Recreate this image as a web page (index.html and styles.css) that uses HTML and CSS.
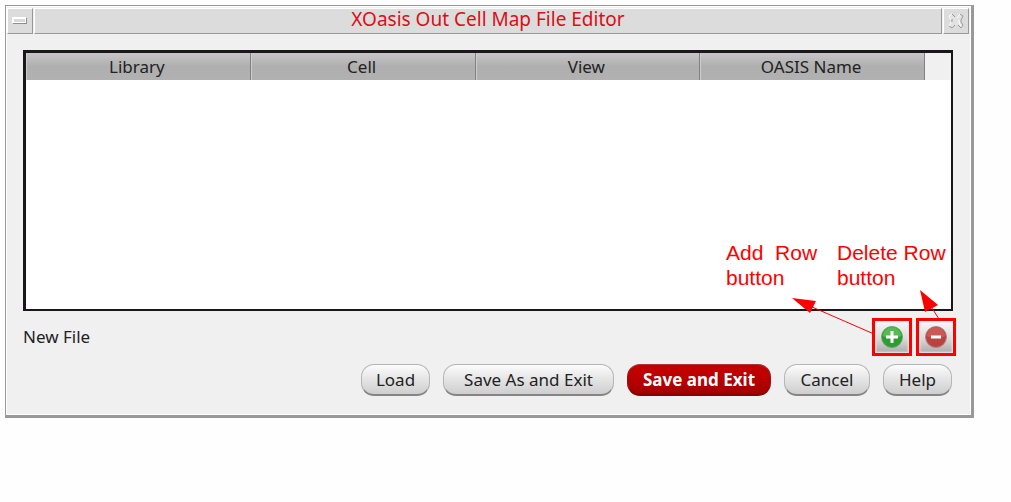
FILE: index.html
```html
<!DOCTYPE html>
<html lang="en">
<head>
<meta charset="utf-8">
<meta name="viewport" content="width=device-width, initial-scale=1">
<title>XOasis Out Cell Map File Editor</title>
<link rel="stylesheet" href="styles.css">
</head>
<body>
<main class="window">
  <header class="titlebar">
    <button class="title-button" type="button" aria-label="Minimize">
      <svg width="16" height="8" viewBox="0 0 16 8" shape-rendering="crispEdges" aria-hidden="true">
        <rect x="1" y="1" width="14" height="6" fill="#8f8f8f"/>
        <rect x="0" y="0" width="14" height="6" fill="#fff"/>
        <rect x="2" y="2" width="11" height="3" fill="#d9d9d9"/>
      </svg>
    </button>
    <h1 class="title">XOasis Out Cell Map File Editor</h1>
    <button class="title-button" type="button" aria-label="Close">
      <svg width="18" height="18" viewBox="0 0 18 18" fill="none" aria-hidden="true">
        <path d="M2 4l3-2 3 3h3l3-3 2 2-2 4v2l2 3-2 3-3-3H8l-3 3-3-2 2-4V8z" fill="#e2e2e2"/>
        <path d="M4 8L2 4l3-2M10 6l3-4M4 10l-2 4M8 13l-2 2M12 8v3l3 4" stroke="#fff"/>
        <path d="M5 2l3 3M5 7v3M2 14l3 2 3-3M13 2l3 2-2 4v2l2 3-2 3-3-3" stroke="#9a9a9a"/>
      </svg>
    </button>
  </header>

  <div class="content">
    <div class="list">
      <table class="cell-table">
        <thead>
          <tr>
            <th scope="col">Library</th>
            <th scope="col">Cell</th>
            <th scope="col">View</th>
            <th scope="col">OASIS Name</th>
            <td class="filler"></td>
          </tr>
        </thead>
        <tbody></tbody>
      </table>
    </div>

    <div class="status-row">
      <span class="status">New File</span>
      <div class="row-tools">
        <button class="tool" type="button" aria-label="Add row">
          <svg width="24" height="24" viewBox="0 0 24 24" aria-hidden="true">
            <circle cx="12" cy="12" r="10.500" fill="#2c9d31" stroke="#69a56b"/>
            <path d="M3 11a9 9 0 0 1 18 0q-9 5-18 0z" fill="#58bb52"/>
            <path d="M12 6v12M6 12h12" stroke="#fff" stroke-width="3"/>
          </svg>
        </button>
        <button class="tool" type="button" aria-label="Delete row">
          <svg width="24" height="24" viewBox="0 0 24 24" aria-hidden="true">
            <circle cx="12" cy="12" r="10.500" fill="#b9433f" stroke="#b98380"/>
            <path d="M3 11a9 9 0 0 1 18 0q-9 5-18 0z" fill="#cb5a56"/>
            <path d="M7 12h10" stroke="#fff" stroke-width="3"/>
          </svg>
        </button>
      </div>
    </div>

    <footer class="actions">
      <button class="action load" type="button">Load</button>
      <button class="action save-as" type="button">Save As and Exit</button>
      <button class="action primary" type="button">Save and Exit</button>
      <button class="action cancel" type="button">Cancel</button>
      <button class="action help" type="button">Help</button>
    </footer>
  </div>

  <div class="callouts">
    <p class="callout add-note">Add &nbsp;Row<br>button</p>
    <p class="callout">Delete Row<br>button</p>
    <svg class="arrows" width="230" height="60" viewBox="0 0 230 60" aria-hidden="true">
      <path d="M70 10L148 44M202 12L213 29" stroke="#f00" fill="none"/>
      <path d="M66 8L90 11L84 23zM194 0L212 15L199 22z" fill="#f00"/>
    </svg>
  </div>
</main>
</body>
</html>
```
FILE: styles.css
```css
* {
  box-sizing: border-box;
}

body {
  margin: 0;
  padding: 5px 37px 5px 5px;
  background: #fefefe;
  color: #222;
  font: 17px/24px "Noto Sans", "Open Sans", sans-serif;
}

button {
  margin: 0;
  padding: 0;
  color: inherit;
  font: inherit;
}

svg {
  display: block;
}

.window {
  position: relative;
  border: 1px solid #999;
  border-right-width: 3px;
  border-bottom-width: 3px;
  background: #f1f0f1;
  box-shadow: inset 1px 1px #fff, inset -1px -1px #fff;
}

.titlebar {
  display: flex;
  gap: 1px;
  height: 28px;
  padding: 2px 2px 0 1px;
}

.title-button,
.title {
  border: 1px solid #fff;
  border-right-color: #999;
  border-bottom-color: #999;
  background: #dcdcdc;
}

.title-button {
  display: flex;
  flex: 0 0 26px;
  align-items: center;
  justify-content: center;
}

.title {
  flex: 1;
  margin: 0;
  color: #dc0d17;
  font-size: 19px;
  font-weight: 400;
  line-height: 20px;
  text-align: center;
}

.content {
  padding: 16px 18px 19px 17px;
}

.list {
  min-height: 261px;
  border: 3px solid #191719;
  border-right-width: 2px;
  border-bottom-width: 2px;
  background: #fff;
}

.cell-table {
  width: 100%;
  table-layout: fixed;
  border-collapse: separate;
  border-spacing: 0;
}

.cell-table th {
  height: 27px;
  padding: 0 2px 0 0;
  border-right: 1px solid #808080;
  background: linear-gradient(#c8c5c8, #afafaf 50%, #b1b1b1);
  box-shadow: inset 1px 0 #cecece;
  font-weight: 400;
}

.filler {
  width: 26px;
  padding: 0;
  background: #f1f0f1;
}

.status-row {
  display: flex;
  align-items: center;
  justify-content: space-between;
  margin: 7px -3px 8px 0;
}

.row-tools {
  display: flex;
  gap: 4px;
}

.tool {
  display: flex;
  width: 40px;
  height: 38px;
  align-items: center;
  justify-content: center;
  border: 3px solid #f00;
  background: linear-gradient(#f8f8f8, #dadada 55%, #aaa);
  box-shadow: inset 0 0 2px 1px #eee;
}

.actions {
  display: flex;
  justify-content: flex-end;
  gap: 13px;
  padding-right: 1px;
}

.action {
  height: 32px;
  border: 1px solid #b5b5b5;
  border-bottom: 2px solid #858585;
  border-radius: 13px;
  background: linear-gradient(#fcfcfc, #e4e4e4 50%, #cecece);
}

.load,
.help {
  width: 69px;
}

.save-as {
  width: 171px;
}

.cancel {
  width: 86px;
}

.primary {
  width: 144px;
  border-color: #a33 #911 #800;
  background: linear-gradient(#c50000, #b80000 50%, #a00000);
  color: #fff;
  font-weight: 700;
}

.callouts {
  position: absolute;
  right: 20px;
  bottom: 65px;
  display: flex;
  width: 225px;
  height: 110px;
  color: #f00;
  pointer-events: none;
}

.callout {
  margin: 0;
  font: 21px/25px "Liberation Sans", Arial, sans-serif;
  white-space: nowrap;
}

.add-note {
  width: 111px;
}

.arrows {
  position: absolute;
  top: 50px;
  left: 0;
  overflow: visible;
}
```
